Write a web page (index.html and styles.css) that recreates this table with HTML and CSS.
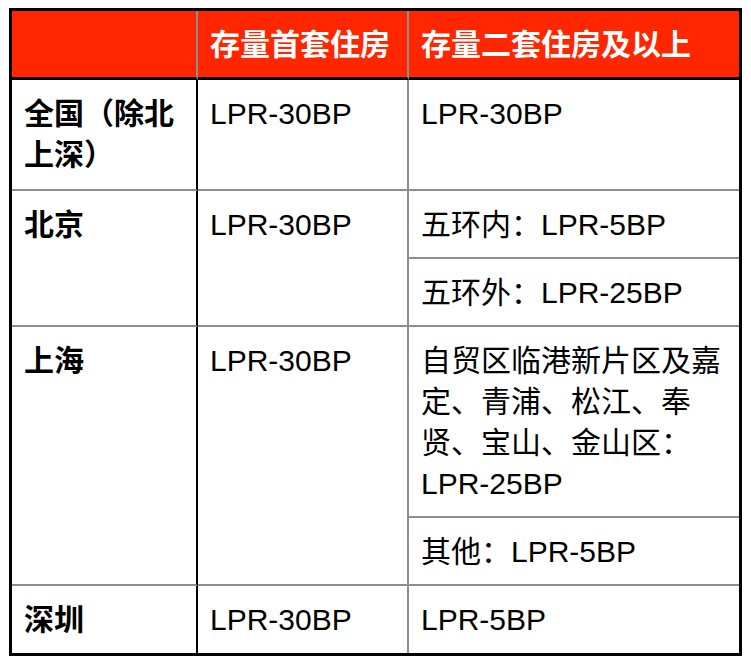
FILE: index.html
```html
<!DOCTYPE html>
<html lang="zh-CN">
<head>
<meta charset="utf-8">
<title>存量房贷利率</title>
<link rel="stylesheet" href="styles.css">
</head>
<body>
<div class="wrap">
<table class="rates">
  <colgroup>
    <col class="c1"><col class="c2"><col class="c3">
  </colgroup>
  <thead>
    <tr>
      <th class="h h1"></th>
      <th class="h h2">存量首套住房</th>
      <th class="h h3">存量二套住房及以上</th>
    </tr>
  </thead>
  <tbody>
    <tr class="first">
      <td class="city">全国（除北<br>上深）</td>
      <td class="v2">LPR-30BP</td>
      <td class="v3">LPR-30BP</td>
    </tr>
    <tr>
      <td class="city" rowspan="2">北京</td>
      <td class="v2" rowspan="2">LPR-30BP</td>
      <td class="v3">五环内：LPR-5BP</td>
    </tr>
    <tr>
      <td class="v3">五环外：LPR-25BP</td>
    </tr>
    <tr>
      <td class="city" rowspan="2">上海</td>
      <td class="v2" rowspan="2">LPR-30BP</td>
      <td class="v3">自贸区临港新片区及嘉<br>定、青浦、松江、奉<br>贤、宝山、金山区：<br>LPR-25BP</td>
    </tr>
    <tr>
      <td class="v3">其他：LPR-5BP</td>
    </tr>
    <tr>
      <td class="city last">深圳</td>
      <td class="v2 last">LPR-30BP</td>
      <td class="v3 last">LPR-5BP</td>
    </tr>
  </tbody>
</table>
</div>
</body>
</html>
```

FILE: styles.css
```css
html, body {
  margin: 0;
  padding: 0;
  background: #ffffff;
}

.wrap {
  padding: 8px 9px;
}

.rates {
  border-collapse: separate;
  border-spacing: 0;
  table-layout: fixed;
  width: 733px;
  border: 3px solid #000000;
  font-family: "Liberation Sans", "Noto Sans CJK SC", sans-serif;
  font-size: 30px;
  line-height: 41px;
  color: #000000;
}

.c1 { width: 186px; }
.c2 { width: 211px; }
.c3 { width: 330px; }

.rates th,
.rates td {
  box-sizing: border-box;
  text-align: left;
  vertical-align: top;
  padding: 13px 10px 12px 12px;
  white-space: nowrap;
}

.h {
  background: #ff2600;
  color: #ffffff;
  font-weight: 700;
  padding-top: 12px;
  padding-bottom: 13px;
  border-bottom: 3px solid #000000;
}

.h1, .h2 {
  border-right: 2px solid #8e8e8e;
}

.city {
  font-weight: 700;
  border-right: 2px solid #000000;
  border-bottom: 2px solid #8e8e8e;
  padding-left: 13px;
}

.v2 {
  border-right: 2px solid #8e8e8e;
  border-bottom: 2px solid #8e8e8e;
  padding-left: 11px;
}

.v3 {
  border-bottom: 2px solid #8e8e8e;
}

.rates .first td {
  padding-bottom: 14px;
}

.rates td.last {
  border-bottom: none;
  padding-bottom: 13px;
}
```
